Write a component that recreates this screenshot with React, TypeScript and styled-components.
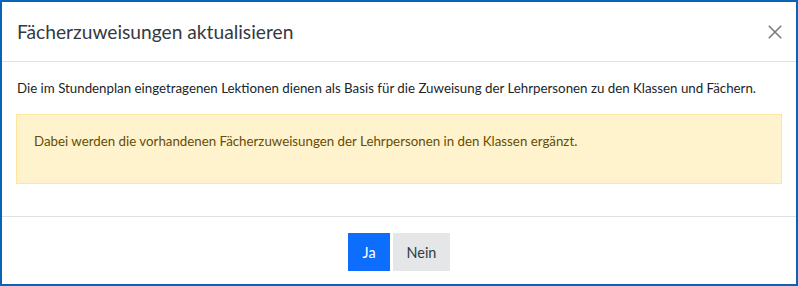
import React from 'react';
import styled, { createGlobalStyle } from 'styled-components';

const GlobalStyle = createGlobalStyle`
  html, body {
    margin: 0;
    padding: 0;
    background: #fff;
  }
  * {
    box-sizing: border-box;
  }
`;

const Modal = styled.div`
  width: 798px;
  height: 286px;
  border: 2px solid #0b63b6;
  background: #fff;
  display: flex;
  flex-direction: column;
  font-family: Lato, 'Noto Sans', sans-serif;
  color: #212529;
`;

const Header = styled.div`
  height: 60px;
  padding: 0 14px 0 15px;
  display: flex;
  align-items: center;
  justify-content: space-between;
  border-bottom: 1px solid #dee2e6;
`;

const Title = styled.h5`
  margin: 0;
  font-size: 19.2px;
  font-weight: 400;
  color: #343a40;
`;

const CloseButton = styled.button`
  width: 14px;
  height: 14px;
  padding: 0;
  border: 0;
  background: transparent;
  display: flex;
  cursor: pointer;
`;

const Body = styled.div`
  padding: 16px 14px;
`;

const Text = styled.p`
  margin: 0 0 16px;
  font-size: 13.3px;
  line-height: 20px;
  white-space: nowrap;
  padding-left: 1px;
`;

const Alert = styled.div`
  background: #fff3cd;
  border: 1px solid #ffe69c;
  padding: 16px;
  margin-bottom: 16px;
`;

const AlertText = styled(Text)`
  color: #664d03;
`;

const Footer = styled.div`
  flex: 1;
  border-top: 1px solid #dee2e6;
  display: flex;
  justify-content: center;
  align-items: flex-start;
  gap: 3px;
  padding-top: 16px;
`;

const Button = styled.button<{ $primary?: boolean }>`
  height: 38px;
  padding: 0 ${(p) => (p.$primary ? '14.5px' : '13.5px')};
  border: 0;
  border-radius: 0;
  font-family: inherit;
  font-size: 14.4px;
  background: ${(p) => (p.$primary ? '#0d6efd' : '#e5e6e8')};
  color: ${(p) => (p.$primary ? '#fff' : '#343a40')};
  cursor: pointer;
`;

export default function App() {
  return (
    <>
      <GlobalStyle />
      <Modal>
        <Header>
          <Title>Fächerzuweisungen aktualisieren</Title>
          <CloseButton aria-label="Schliessen">
            <svg width="14" height="14" viewBox="0 0 14 14">
              <path d="M0.8 0.8L13.2 13.2M13.2 0.8L0.8 13.2" stroke="#7a7a7a" strokeWidth="1.6" />
            </svg>
          </CloseButton>
        </Header>
        <Body>
          <Text>
            Die im Stundenplan eingetragenen Lektionen dienen als Basis für die Zuweisung der Lehrpersonen zu
            den Klassen und Fächern.
          </Text>
          <Alert>
            <AlertText>Dabei werden die vorhandenen Fächerzuweisungen der Lehrpersonen in den Klassen ergänzt.</AlertText>
          </Alert>
        </Body>
        <Footer>
          <Button $primary>Ja</Button>
          <Button>Nein</Button>
        </Footer>
      </Modal>
    </>
  );
}
